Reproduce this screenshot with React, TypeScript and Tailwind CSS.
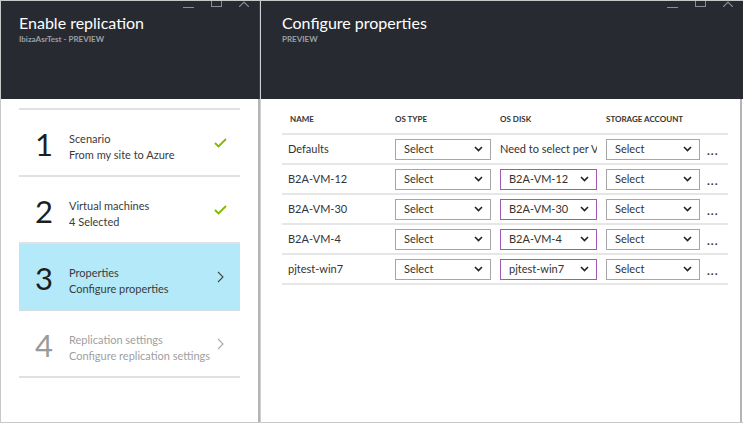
import React from 'react'

const font = { fontFamily: 'Lato, "Noto Sans", sans-serif' }

function WinControls() {
  return (
    <div className="absolute top-0 right-[10px] flex items-start gap-[17px]">
      <div className="w-[11px] h-[1px] bg-[#8a8f95] mt-[6px]" />
      <div className="w-[11px] h-[6px] border border-t-0 border-[#8a8f95]" />
      <svg width="10" height="6" viewBox="0 0 10 6">
        <path d="M0 6 L5 1 L10 6" stroke="#8a8f95" strokeWidth="1.2" fill="none" />
      </svg>
    </div>
  )
}

function Check() {
  return (
    <svg width="13" height="10" viewBox="0 0 13 10">
      <path d="M1 5 L4.5 8.5 L12 1" stroke="#7fba00" strokeWidth="1.8" fill="none" />
    </svg>
  )
}

function Chevron({ color }: { color: string }) {
  return (
    <svg width="7" height="12" viewBox="0 0 7 12">
      <path d="M1 1 L6 6 L1 11" stroke={color} strokeWidth="1.1" fill="none" />
    </svg>
  )
}

const steps = [
  { n: '1', title: 'Scenario', sub: 'From my site to Azure', state: 'done' },
  { n: '2', title: 'Virtual machines', sub: '4 Selected', state: 'done' },
  { n: '3', title: 'Properties', sub: 'Configure properties', state: 'active' },
  { n: '4', title: 'Replication settings', sub: 'Configure replication settings', state: 'disabled' },
]

function Select({ label, purple }: { label: string; purple?: boolean }) {
  return (
    <div
      className={`h-[21px] flex items-center justify-between pl-[8px] pr-[7px] text-[11px] text-[#333] bg-white border ${
        purple ? 'border-[#a259b4]' : 'border-[#a6a6a6]'
      }`}
    >
      <span>{label}</span>
      <svg width="9" height="6" viewBox="0 0 9 6">
        <path d="M1 1 L4.5 4.5 L8 1" stroke="#222" strokeWidth="1.6" fill="none" />
      </svg>
    </div>
  )
}

const rows = [
  { name: 'Defaults', disk: null },
  { name: 'B2A-VM-12', disk: 'B2A-VM-12' },
  { name: 'B2A-VM-30', disk: 'B2A-VM-30' },
  { name: 'B2A-VM-4', disk: 'B2A-VM-4' },
  { name: 'pjtest-win7', disk: 'pjtest-win7' },
]

const cols = 'grid grid-cols-[113px_105px_106px_94px_1fr]'

export default function App() {
  return (
    <div style={font} className="w-[743px] h-[423px] flex bg-white border-t border-l border-b border-[#c8c8c8] overflow-hidden">
      {/* left blade */}
      <div className="w-[259px] flex flex-col">
        <div className="relative h-[98px] bg-[#272b31] px-[18px] pt-[11px] border-r border-[#3a3f45]">
          <WinControls />
          <div className="text-white text-[16px] leading-[22px]">Enable replication</div>
          <div className="text-[#9aa0a6] text-[8px] font-bold leading-[10px]">IbizaAsrTest - PREVIEW</div>
        </div>
        <div className="flex-1 border-r-2 border-[#b4b4b4] pt-[9px] px-[18px]">
          <div className="border-t-2 border-[#e1e1e1]">
            {steps.map((s) => (
              <div
                key={s.n}
                className={`h-[67px] flex items-center border-b-2 ${
                  s.state === 'active' ? 'bg-[#b3e9f8] border-[#d5dde0]' : 'border-[#e1e1e1]'
                }`}
              >
                <div
                  className={`w-[50px] shrink-0 pt-[3px] text-center text-[31px] leading-none ${
                    s.state === 'disabled' ? 'text-[#9a9a9a]' : 'text-[#1e1e1e]'
                  }`}
                >
                  {s.n}
                </div>
                <div
                  className={`flex-1 min-w-0 pt-[8px] whitespace-nowrap text-[11px] leading-[16px] ${
                    s.state === 'disabled' ? 'text-[#a0a0a0]' : 'text-[#3a3a3a]'
                  }`}
                >
                  <div>{s.title}</div>
                  <div>{s.sub}</div>
                </div>
                <div className="w-[40px] shrink-0 flex justify-center">
                  {s.state === 'done' ? (
                    <Check />
                  ) : (
                    <Chevron color={s.state === 'disabled' ? '#a8a8a8' : '#444'} />
                  )}
                </div>
              </div>
            ))}
          </div>
        </div>
      </div>

      {/* right blade */}
      <div className="flex-1 flex flex-col border-l border-[#d0d0d0]">
        <div className="relative h-[98px] bg-[#272b31] pl-[21px] pt-[11px]">
          <WinControls />
          <div className="text-white text-[16px] leading-[22px]">Configure properties</div>
          <div className="text-[#9aa0a6] text-[8px] font-bold leading-[10px]">PREVIEW</div>
        </div>
        <div className="flex-1 pl-[21px] pr-[12px] pt-[6px] border-r-2 border-[#b4b4b4] mr-[1px]">
          <div className={`${cols} h-[30px] items-center text-[8px] font-bold text-[#333] border-b-2 border-[#e6e6e6]`}>
            <div className="pl-[8px]">NAME</div>
            <div>OS TYPE</div>
            <div>OS DISK</div>
            <div className="whitespace-nowrap">STORAGE ACCOUNT</div>
          </div>
          {rows.map((r) => (
            <div key={r.name} className={`${cols} h-[30px] items-center border-b-2 border-[#e6e6e6] text-[11px] text-[#333]`}>
              <div className="pl-[6px]">{r.name}</div>
              <div className="pr-[9px]">
                <Select label="Select" />
              </div>
              <div className="pr-[9px]">
                {r.disk ? (
                  <Select label={r.disk} purple />
                ) : (
                  <div className="whitespace-nowrap overflow-hidden">Need to select per VM</div>
                )}
              </div>
              <div>
                <Select label="Select" />
              </div>
              <div className="pl-[7px] pt-[3px] text-[12px] font-bold tracking-[1px] text-[#333]">...</div>
            </div>
          ))}
        </div>
      </div>
    </div>
  )
}
